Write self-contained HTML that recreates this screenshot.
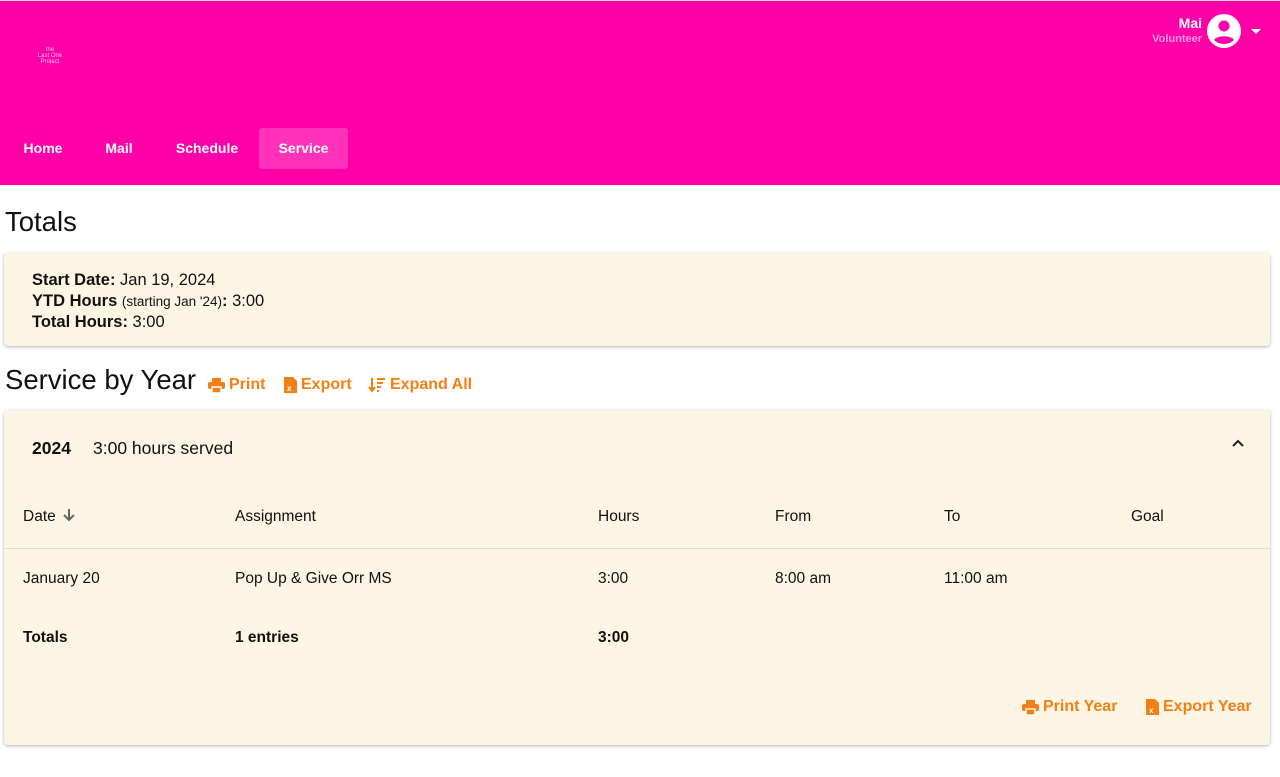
<!DOCTYPE html>
<html><head><style>
*{box-sizing:border-box;margin:0;padding:0}
body{width:1280px;height:777px;background:#fff;font-family:"Liberation Sans",Arial,sans-serif;color:#111;position:relative;overflow:hidden}
.hdr{position:absolute;left:0;top:1px;width:1280px;height:184px;background:#ff00a8}
.topline{position:absolute;left:0;top:0;width:1280px;height:1px;background:#ddd}
.nav a{position:absolute;top:127px;height:41px;line-height:41px;color:#fff;font-weight:bold;font-size:14px;text-align:center;border-radius:3px}
.card{position:absolute;left:4px;width:1266px;background:#fdf5e4;border-radius:4px;box-shadow:0 1px 3px rgba(0,0,0,.3)}
.or{color:#f47f14;font-weight:bold;font-size:16px;position:absolute;display:flex;align-items:center;gap:4px}
.t{position:absolute;font-size:15.5px}
.b{font-weight:bold}
</style></head><body>
<div class="topline"></div>
<div class="hdr">
 <div style="position:absolute;left:36px;top:46px;color:#ffc0e8;font-size:6px;line-height:6px;text-align:center;width:28px">the<br>Last One<br>Project</div>
 <div style="position:absolute;right:78px;top:14px;text-align:right;color:#fff;font-weight:bold;font-size:14px">Mai<div style="font-size:11px;color:#ff9ad8;margin-top:2px">Volunteer</div></div>
 <svg style="position:absolute;left:1206px;top:12px" width="36" height="36" viewBox="0 0 36 36"><circle cx="18" cy="18" r="17" fill="#fff"/><circle cx="18" cy="13" r="5.5" fill="#ff00a8"/><path d="M8 27c3-5 17-5 20 0c-3 3-7 4-10 4s-7-1-10-4z" fill="#ff00a8"/></svg>
 <svg style="position:absolute;left:1251px;top:28px" width="10" height="6"><path d="M0 0h10L5 5z" fill="#fff"/></svg>
 <div class="nav">
  <a style="left:8px;width:70px">Home</a>
  <a style="left:88px;width:62px">Mail</a>
  <a style="left:160px;width:94px">Schedule</a>
  <a style="left:259px;width:89px;background:#ff33bb">Service</a>
 </div>
</div>
<div style="position:absolute;left:5px;top:206px;font-size:27.5px">Totals</div>
<div class="card" style="top:253px;height:93px">
 <div style="position:absolute;left:28px;top:17px;font-size:16.5px;line-height:21px">
  <div><b>Start Date:</b> Jan 19, 2024</div>
  <div><b>YTD Hours</b> <span style="font-size:13.5px">(starting Jan '24)</span><b>:</b> 3:00</div>
  <div><b>Total Hours:</b> 3:00</div>
 </div>
</div>
<div style="position:absolute;left:5px;top:364px;font-size:27.5px">Service by Year</div>
<div class="or" style="left:208px;top:376px"><svg width="17" height="15" viewBox="0 0 17 15"><rect x="4" y="0" width="9" height="4" fill="#f47f14"/><rect x="0" y="4" width="17" height="7" rx="2" fill="#f47f14"/><rect x="4" y="9" width="9" height="6" fill="#f47f14" stroke="#fff" stroke-width="1.5"/></svg>Print</div>
<div class="or" style="left:284px;top:376px"><svg width="13" height="16" viewBox="0 0 13 16"><path d="M0 0h9l4 4v12H0z" fill="#f47f14"/><text x="3" y="14" font-size="8" fill="#fff" font-family="Liberation Sans">x</text></svg>Export</div>
<div class="or" style="left:368px;top:376px"><svg width="18" height="16" viewBox="0 0 18 16"><path d="M4 1v12M1 10l3 4 3-4" stroke="#f47f14" stroke-width="2" fill="none"/><path d="M9 2h8M9 6h6M9 10h4M9 14h2" stroke="#f47f14" stroke-width="2"/></svg>Expand All</div>
<div class="card" style="top:410px;height:335px">
 <div class="t b" style="left:28px;top:28px;font-size:17.5px">2024</div>
 <div class="t" style="left:89px;top:28px;font-size:17.5px">3:00 hours served</div>
 <svg style="position:absolute;left:1228px;top:29px" width="12" height="8"><path d="M1 7l5-5 5 5" stroke="#222" stroke-width="2" fill="none"/></svg>
 <div class="t" style="left:19px;top:98px">Date <svg width="14" height="14" viewBox="0 0 14 14" style="vertical-align:-1px;margin-left:2px"><path d="M7 1v11M2 7l5 5 5-5" stroke="#666" stroke-width="2" fill="none"/></svg></div>
 <div class="t" style="left:231px;top:98px">Assignment</div>
 <div class="t" style="left:594px;top:98px">Hours</div>
 <div class="t" style="left:771px;top:98px">From</div>
 <div class="t" style="left:940px;top:98px">To</div>
 <div class="t" style="left:1127px;top:98px">Goal</div>
 <div style="position:absolute;left:0;top:138px;width:1266px;height:1px;background:#e0ddd5"></div>
 <div class="t" style="left:19px;top:160px">January 20</div>
 <div class="t" style="left:231px;top:160px">Pop Up &amp; Give Orr MS</div>
 <div class="t" style="left:594px;top:160px">3:00</div>
 <div class="t" style="left:771px;top:160px">8:00 am</div>
 <div class="t" style="left:940px;top:160px">11:00 am</div>
 <div class="t b" style="left:19px;top:219px">Totals</div>
 <div class="t b" style="left:231px;top:219px">1 entries</div>
 <div class="t b" style="left:594px;top:219px">3:00</div>
 <div class="or" style="left:1018px;top:288px"><svg width="17" height="15" viewBox="0 0 17 15"><rect x="4" y="0" width="9" height="4" fill="#f47f14"/><rect x="0" y="4" width="17" height="7" rx="2" fill="#f47f14"/><rect x="4" y="9" width="9" height="6" fill="#f47f14" stroke="#fdf5e4" stroke-width="1.5"/></svg>Print Year</div>
 <div class="or" style="left:1142px;top:288px"><svg width="13" height="16" viewBox="0 0 13 16"><path d="M0 0h9l4 4v12H0z" fill="#f47f14"/><text x="3" y="14" font-size="8" fill="#fff" font-family="Liberation Sans">x</text></svg>Export Year</div>
</div>
</body></html>
